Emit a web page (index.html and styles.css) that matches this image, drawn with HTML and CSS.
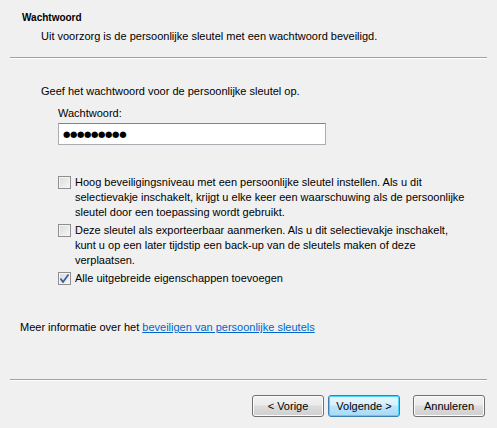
FILE: index.html
```html
<!DOCTYPE html>
<html>
<head>
<meta charset="utf-8">
<link rel="stylesheet" href="styles.css">
</head>
<body>
<div class="wizard">
  <header class="head">
    <div class="title">Wachtwoord</div>
    <div class="subtitle">Uit voorzorg is de persoonlijke sleutel met een wachtwoord beveiligd.</div>
  </header>
  <div class="sep"></div>
  <main class="body">
    <p class="intro">Geef het wachtwoord voor de persoonlijke sleutel op.</p>
    <div class="field">
      <label class="label">Wachtwoord:</label>
      <div class="input"><span class="dots">●●●●●●●●●</span></div>
    </div>
    <div class="options">
      <div class="opt">
        <span class="cb"></span>
        <span class="opt-text">Hoog beveiligingsniveau met een persoonlijke sleutel instellen. Als u dit<br>selectievakje inschakelt, krijgt u elke keer een waarschuwing als de persoonlijke<br>sleutel door een toepassing wordt gebruikt.</span>
      </div>
      <div class="opt">
        <span class="cb"></span>
        <span class="opt-text">Deze sleutel als exporteerbaar aanmerken. Als u dit selectievakje inschakelt,<br>kunt u op een later tijdstip een back-up van de sleutels maken of deze<br>verplaatsen.</span>
      </div>
      <div class="opt">
        <span class="cb checked"><svg width="11" height="11" viewBox="0 0 11 11"><path d="M1.5 5.5 L4 9 L9.5 1.5" fill="none" stroke="#3f5e9c" stroke-width="1.8"/></svg></span>
        <span class="opt-text">Alle uitgebreide eigenschappen toevoegen</span>
      </div>
    </div>
    <p class="more">Meer informatie over het <a class="link" href="#">beveiligen van persoonlijke sleutels</a></p>
  </main>
  <div class="sep bottom"></div>
  <footer class="buttons">
    <button class="btn">&lt; Vorige</button>
    <button class="btn default">Volgende &gt;</button>
    <button class="btn cancel">Annuleren</button>
  </footer>
</div>
</body>
</html>
```
FILE: styles.css
```css
html, body {
  margin: 0;
  padding: 0;
  background: #f0f0f0;
}
.wizard {
  width: 497px;
  height: 428px;
  font-family: "Liberation Sans", Arial, sans-serif;
  font-size: 11px;
  color: #000;
  display: flex;
  flex-direction: column;
}
.head {
  padding: 11px 0 0 22px;
  height: 57px;
  box-sizing: border-box;
}
.title {
  font-weight: bold;
  font-size: 10px;
  line-height: 13px;
}
.subtitle {
  margin: 5px 0 0 19px;
  line-height: 15px;
}
.sep {
  margin: 0 10px;
  height: 1px;
  background: #a0a0a0;
  border-bottom: 1px solid #ffffff;
}
.body {
  flex: 1;
  padding: 25px 0 0 41px;
}
.intro {
  margin: 0;
  line-height: 15px;
}
.field {
  margin: 7px 0 0 17px;
}
.label {
  display: block;
  line-height: 15px;
}
.input {
  margin-top: 2px;
  width: 268px;
  height: 22px;
  box-sizing: border-box;
  background: #fff;
  border: 1px solid #abadb3;
  border-top-color: #7f8489;
  display: flex;
  align-items: center;
  padding-left: 4px;
}
.dots {
  font-family: "DejaVu Sans", sans-serif;
  font-size: 8.5px;
  letter-spacing: -0.4px;
}
.options {
  margin: 30px 0 0 17px;
  display: flex;
  flex-direction: column;
  gap: 3px;
}
.opt {
  display: flex;
  align-items: flex-start;
  width: 430px;
}
.cb {
  flex: none;
  width: 13px;
  height: 13px;
  box-sizing: border-box;
  border: 1px solid #8f8f8f;
  background: linear-gradient(135deg, #dcdcdc, #f6f6f6);
  box-shadow: inset 0 0 0 1px #f4f4f4;
  margin: 1px 4px 0 0;
  display: flex;
  align-items: center;
  justify-content: center;
}
.opt-text {
  line-height: 15px;
  white-space: nowrap;
}
.more {
  margin: 34px 0 0 -21px;
  line-height: 15px;
}
.link {
  color: #0066cc;
  text-decoration: underline;
}
.bottom {
  margin-bottom: 14px;
}
.buttons {
  display: flex;
  padding: 0 12px 10px 0;
  justify-content: flex-end;
  height: 33px;
  box-sizing: border-box;
}
.btn {
  width: 72px;
  height: 22px;
  font-family: "Liberation Sans", Arial, sans-serif;
  font-size: 11px;
  color: #000;
  border: 1px solid #707070;
  border-radius: 3px;
  background: linear-gradient(#f2f2f2 0%, #ebebeb 45%, #dddddd 50%, #cfcfcf 100%);
  box-shadow: inset 0 0 0 1px #fcfcfc;
  padding: 0;
  margin-left: 4px;
}
.btn.default {
  border-color: #3c7fb1;
  background: linear-gradient(#eaf6fd 0%, #d9f0fc 45%, #bee6fd 50%, #a7d9f5 100%);
  box-shadow: inset 0 0 0 1px #48d6fd;
}
.btn.cancel {
  margin-left: 13px;
}
```
